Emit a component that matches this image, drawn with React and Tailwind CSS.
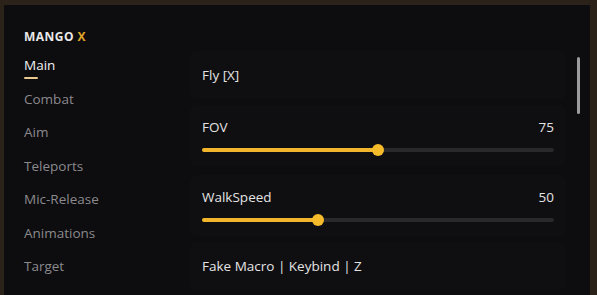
import React from "react";

const tabs = ["Main", "Combat", "Aim", "Teleports", "Mic-Release", "Animations", "Target"];

function Slider({ label, value, pct }) {
  return (
    <div className="h-[61px] rounded-md bg-[#0f0e11] px-3 pt-[13px]">
      <div className="flex justify-between text-[13.5px] font-medium leading-[18px] text-[#e4e4e4]">
        <span>{label}</span>
        <span>{value}</span>
      </div>
      <div className="relative mt-[12px] h-[4px] rounded-full bg-[#29282b]">
        <div className="h-full rounded-full bg-[#f2b62c]" style={{ width: `${pct}%` }} />
        <div
          className="absolute top-1/2 h-[12px] w-[12px] -translate-x-1/2 -translate-y-1/2 rounded-full bg-[#f5bb2a]"
          style={{ left: `${pct}%` }}
        />
      </div>
    </div>
  );
}

export default function App() {
  return (
    <div
      className="w-[597px] h-[295px] bg-[#2b2319] pt-[5px] pl-[4px] pr-[7px] overflow-hidden"
      style={{ fontFamily: "'Open Sans', Lato, sans-serif" }}
    >
      <div className="flex h-full bg-[#0d0c0f]">
        {/* sidebar */}
        <div className="w-[181px] pl-[20px] pt-[25px]">
          <div className="text-[12px] font-bold tracking-[0.04em] text-[#e8e8e8] leading-[14px]">
            MANGO <span className="text-[#e0a72b]">X</span>
          </div>
          <div className="mt-[12px] flex flex-col">
            {tabs.map((t, i) => (
              <div key={t} className="h-[33.5px] text-[13.5px] font-medium leading-[18px]">
                <span className={i === 0 ? "text-[#f0f0f0]" : "text-[#8b8a8d]"}>{t}</span>
                {i === 0 && <div className="mt-[3px] h-[2px] w-[14px] rounded-full bg-[#e9c98f]" />}
              </div>
            ))}
          </div>
        </div>

        {/* content */}
        <div className="relative flex-1 pl-[5px] pt-[46px]">
          <div className="w-[376px] flex flex-col">
            <div className="flex h-[48px] items-center rounded-md bg-[#0f0e11] px-3 text-[13.5px] font-medium text-[#e4e4e4]">
              Fly [X]
            </div>
            <div className="mt-[6px] h-[62px]">
              <Slider label="FOV" value="75" pct={50} />
            </div>
            <div className="mt-[8px]">
              <Slider label="WalkSpeed" value="50" pct={33} />
            </div>
            <div className="mt-[6px] flex h-[48px] items-center rounded-md bg-[#0f0e11] px-3 text-[13.5px] font-medium text-[#e4e4e4]">
              Fake Macro | Keybind | Z
            </div>
          </div>
          <div className="absolute left-[392px] top-[52px] h-[57px] w-[3px] rounded-full bg-[#9c9b9e]" />
        </div>
      </div>
    </div>
  );
}
